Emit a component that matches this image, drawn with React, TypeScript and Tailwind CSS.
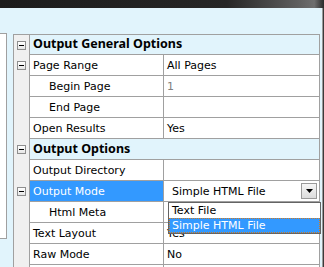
import React from "react";

function Minus() {
  return (
    <div className="w-[9px] h-[9px] border border-[#8e8e8e] bg-[linear-gradient(to_bottom,#ffffff,#e6e6e6)] flex items-center justify-center">
      <div className="w-[5px] h-[1px] bg-black" />
    </div>
  );
}

type RowProps = {
  name: string;
  value?: React.ReactNode;
  minus?: boolean;
  indent?: boolean;
  header?: boolean;
  first?: boolean;
  selected?: boolean;
  valueNode?: React.ReactNode;
  gray?: boolean;
};

function Row({ name, value, minus, indent, header, first, selected, valueNode, gray }: RowProps) {
  return (
    <div className={`flex shrink-0 ${first ? "h-[20px]" : "h-[21px]"}`}>
      <div className="w-[16px] shrink-0 bg-[#f0f0f0] border-r border-[#a0a0a0] flex items-center justify-center">
        {minus ? <Minus /> : null}
      </div>
      {header ? (
        <div className="flex-1 border-b border-[#a0a0a0] bg-[#e1f4fc] flex items-center pl-[3px] font-bold text-black font-['Noto_Sans',sans-serif] text-[12.5px]">
          {name}
        </div>
      ) : (
        <div className="flex flex-1 border-b border-[#a0a0a0]">
          <div
            className={`w-[134px] shrink-0 border-r border-[#a0a0a0] flex items-center ${indent ? "pl-[19px]" : "pl-[3px]"} ${selected ? "bg-[#3399ff] text-white" : "bg-white text-black"}`}
          >
            {name}
          </div>
          <div className={`flex-1 relative bg-white flex items-center pl-[3px] ${gray ? "text-[#808080]" : "text-black"}`}>
            {valueNode ?? value}
          </div>
        </div>
      )}
    </div>
  );
}

function Combo() {
  return (
    <>
      <div className="flex-1 flex items-center pl-[5px] text-black h-full">Simple HTML File</div>
      <div className="w-[16px] h-[16px] mr-[2px] border border-[#9a9a9a] bg-[linear-gradient(to_bottom,#f6f6f6,#dcdcdc)] flex items-center justify-center">
        <svg width="7" height="4" viewBox="0 0 7 4">
          <path d="M0 0 H7 L3.5 4 Z" fill="#000" />
        </svg>
      </div>
      <div className="absolute left-[4px] top-[21px] w-[153px] h-[32px] border border-[#646464] bg-white z-10 flex flex-col text-[11px]">
        <div className="h-[15px] flex items-center pl-[3px] text-black">Text File</div>
        <div className="h-[15px] flex items-center pl-[2px] bg-[#3399ff] text-white border border-dotted border-[#d27a1e]">
          Simple HTML File
        </div>
      </div>
    </>
  );
}

export default function App() {
  return (
    <div className="w-[324px] h-[267px] overflow-hidden bg-[#e1f4fc] flex flex-col font-['DejaVu_Sans',sans-serif] text-[11px] leading-none">
      <div className="h-[8px] shrink-0 bg-[linear-gradient(to_right,#1c1c1c_0%,#262626_70%,#5e5e5e_92%,#6e6e6e_97%,#2a2a2a_100%)]" />
      <div className="flex flex-1 min-h-0">
        <div className="w-[7px] shrink-0 mt-[25px] h-[206px] bg-white border border-l-0 border-[#a0a0a0]" />
        <div className="ml-[6px] mt-[26px] w-[307px] shrink-0 border-l border-t border-r border-[#a0a0a0] flex flex-col">
          <Row first header minus name="Output General Options" />
          <Row minus name="Page Range" value="All Pages" />
          <Row indent name="Begin Page" value="1" gray />
          <Row indent name="End Page" value="" />
          <Row name="Open Results" value="Yes" />
          <Row header minus name="Output Options" />
          <Row name="Output Directory" value="" />
          <Row minus selected name="Output Mode" valueNode={<Combo />} />
          <Row indent name="Html Meta" value="" />
          <Row name="Text Layout" value="Yes" />
          <Row name="Raw Mode" value="No" />
          <Row name="" value="" />
        </div>
        <div className="ml-[2px] w-[1px] shrink-0 bg-[#9a9a9a]" />
        <div className="w-[1px] shrink-0 bg-[#3a3a3a]" />
      </div>
    </div>
  );
}
